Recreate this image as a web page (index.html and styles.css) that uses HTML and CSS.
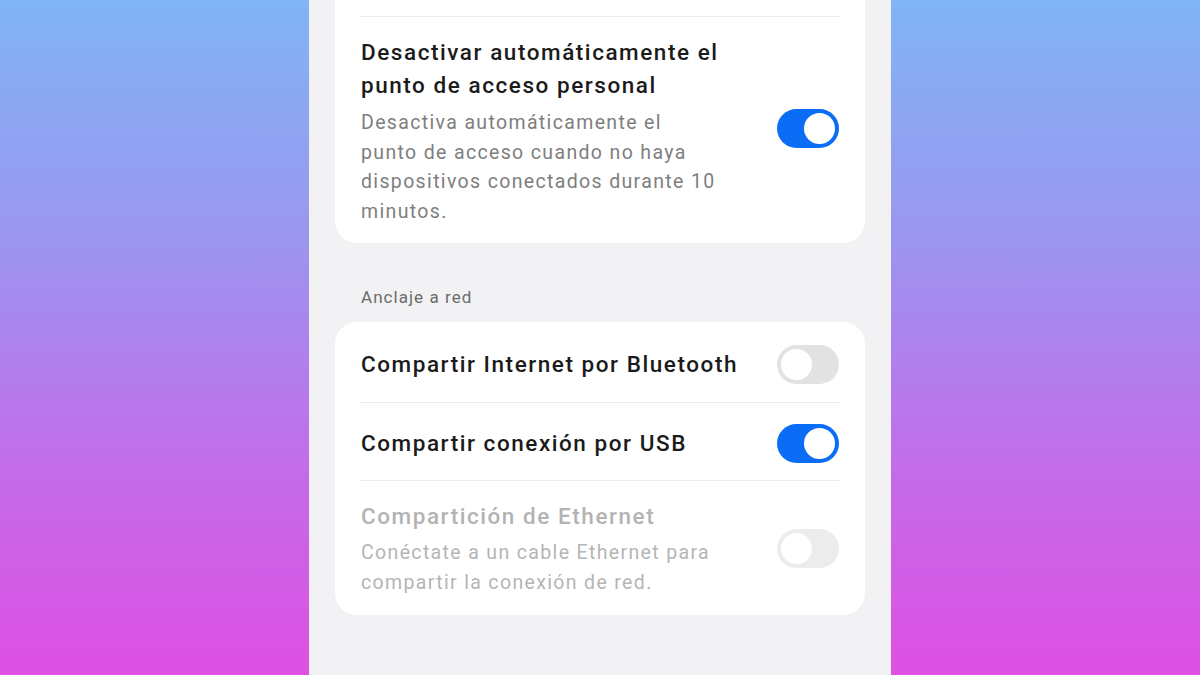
FILE: index.html
```html
<!DOCTYPE html>
<html lang="es">
<head>
<meta charset="utf-8">
<title>Anclaje a red</title>
<link rel="stylesheet" href="styles.css">
</head>
<body>
<div class="panel">
  <div class="card card-first">
    <div class="row row-hidden"></div>
    <div class="row row-multi">
      <div class="text">
        <div class="title">Desactivar automáticamente el punto de acceso personal</div>
        <div class="desc">Desactiva automáticamente el punto de acceso cuando no haya dispositivos conectados durante 10 minutos.</div>
      </div>
      <div class="switch on"><span class="knob"></span></div>
    </div>
  </div>

  <div class="section-label">Anclaje a red</div>

  <div class="card">
    <div class="row row-single">
      <div class="text"><div class="title">Compartir Internet por Bluetooth</div></div>
      <div class="switch off"><span class="knob"></span></div>
    </div>
    <div class="row row-single">
      <div class="text"><div class="title">Compartir conexión por USB</div></div>
      <div class="switch on"><span class="knob"></span></div>
    </div>
    <div class="row row-multi row-disabled">
      <div class="text">
        <div class="title">Compartición de Ethernet</div>
        <div class="desc">Conéctate a un cable Ethernet para compartir la conexión de red.</div>
      </div>
      <div class="switch off dim"><span class="knob"></span></div>
    </div>
  </div>
</div>
</body>
</html>
```

FILE: styles.css
```css
* { box-sizing: border-box; }

html, body {
  margin: 0;
  padding: 0;
}

body {
  width: 1200px;
  height: 675px;
  overflow: hidden;
  background: linear-gradient(180deg, #80b5f5 0%, #9b96f0 35%, #c46be9 70%, #de50e3 100%);
  font-family: Roboto, "Noto Sans", "Liberation Sans", sans-serif;
}

.panel {
  width: 582px;
  height: 675px;
  margin: 0 auto;
  background: #f2f2f4;
  padding: 0 26px;
  overflow: hidden;
}

.card {
  background: #ffffff;
  border-radius: 22px;
  padding: 0 25px;
}

.card-first {
  margin-top: -40px;
}

.card-first .switch {
  margin-bottom: 5px;
}

.row {
  display: flex;
  align-items: center;
  justify-content: space-between;
  border-bottom: 1px solid #ececee;
}

.row:last-child {
  border-bottom: none;
}

.row-hidden {
  height: 57px;
}

.row-multi {
  padding: 19px 0 17px 1px;
}

.row-single {
  padding: 21px 0 17px 1px;
}

.row-single:first-child {
  padding: 23px 0 18px 1px;
}

.row-disabled {
  padding-top: 19px;
}

.text {
  flex: 1;
  padding-right: 16px;
}

.title {
  font-size: 22.5px;
  line-height: 33px;
  font-weight: 500;
  letter-spacing: 1.55px;
  color: #1b1b1b;
  max-width: 384px;
}

.desc {
  margin-top: 6px;
  font-size: 19.5px;
  line-height: 29.6px;
  letter-spacing: 1.35px;
  color: #7e7e7e;
  max-width: 358px;
}

.row-disabled .title { color: #b3b3b3; }
.row-disabled .desc { color: #b5b5b5; margin-top: 5px; }

.switch {
  flex: none;
  width: 62px;
  height: 39px;
  border-radius: 20px;
  position: relative;
  margin-right: 1px;
}

.switch.on { background: #0b6cf6; }
.switch.off { background: #e2e2e2; }
.switch.dim { background: #ececec; }

.knob {
  position: absolute;
  top: 4px;
  width: 31px;
  height: 31px;
  border-radius: 50%;
  background: #ffffff;
}

.switch.on .knob { right: 4px; }
.switch.off .knob { left: 4px; }

.section-label {
  padding: 43px 0 14px 26px;
  font-size: 17px;
  line-height: 22px;
  letter-spacing: 1.05px;
  color: #6b6b6b;
}
```
